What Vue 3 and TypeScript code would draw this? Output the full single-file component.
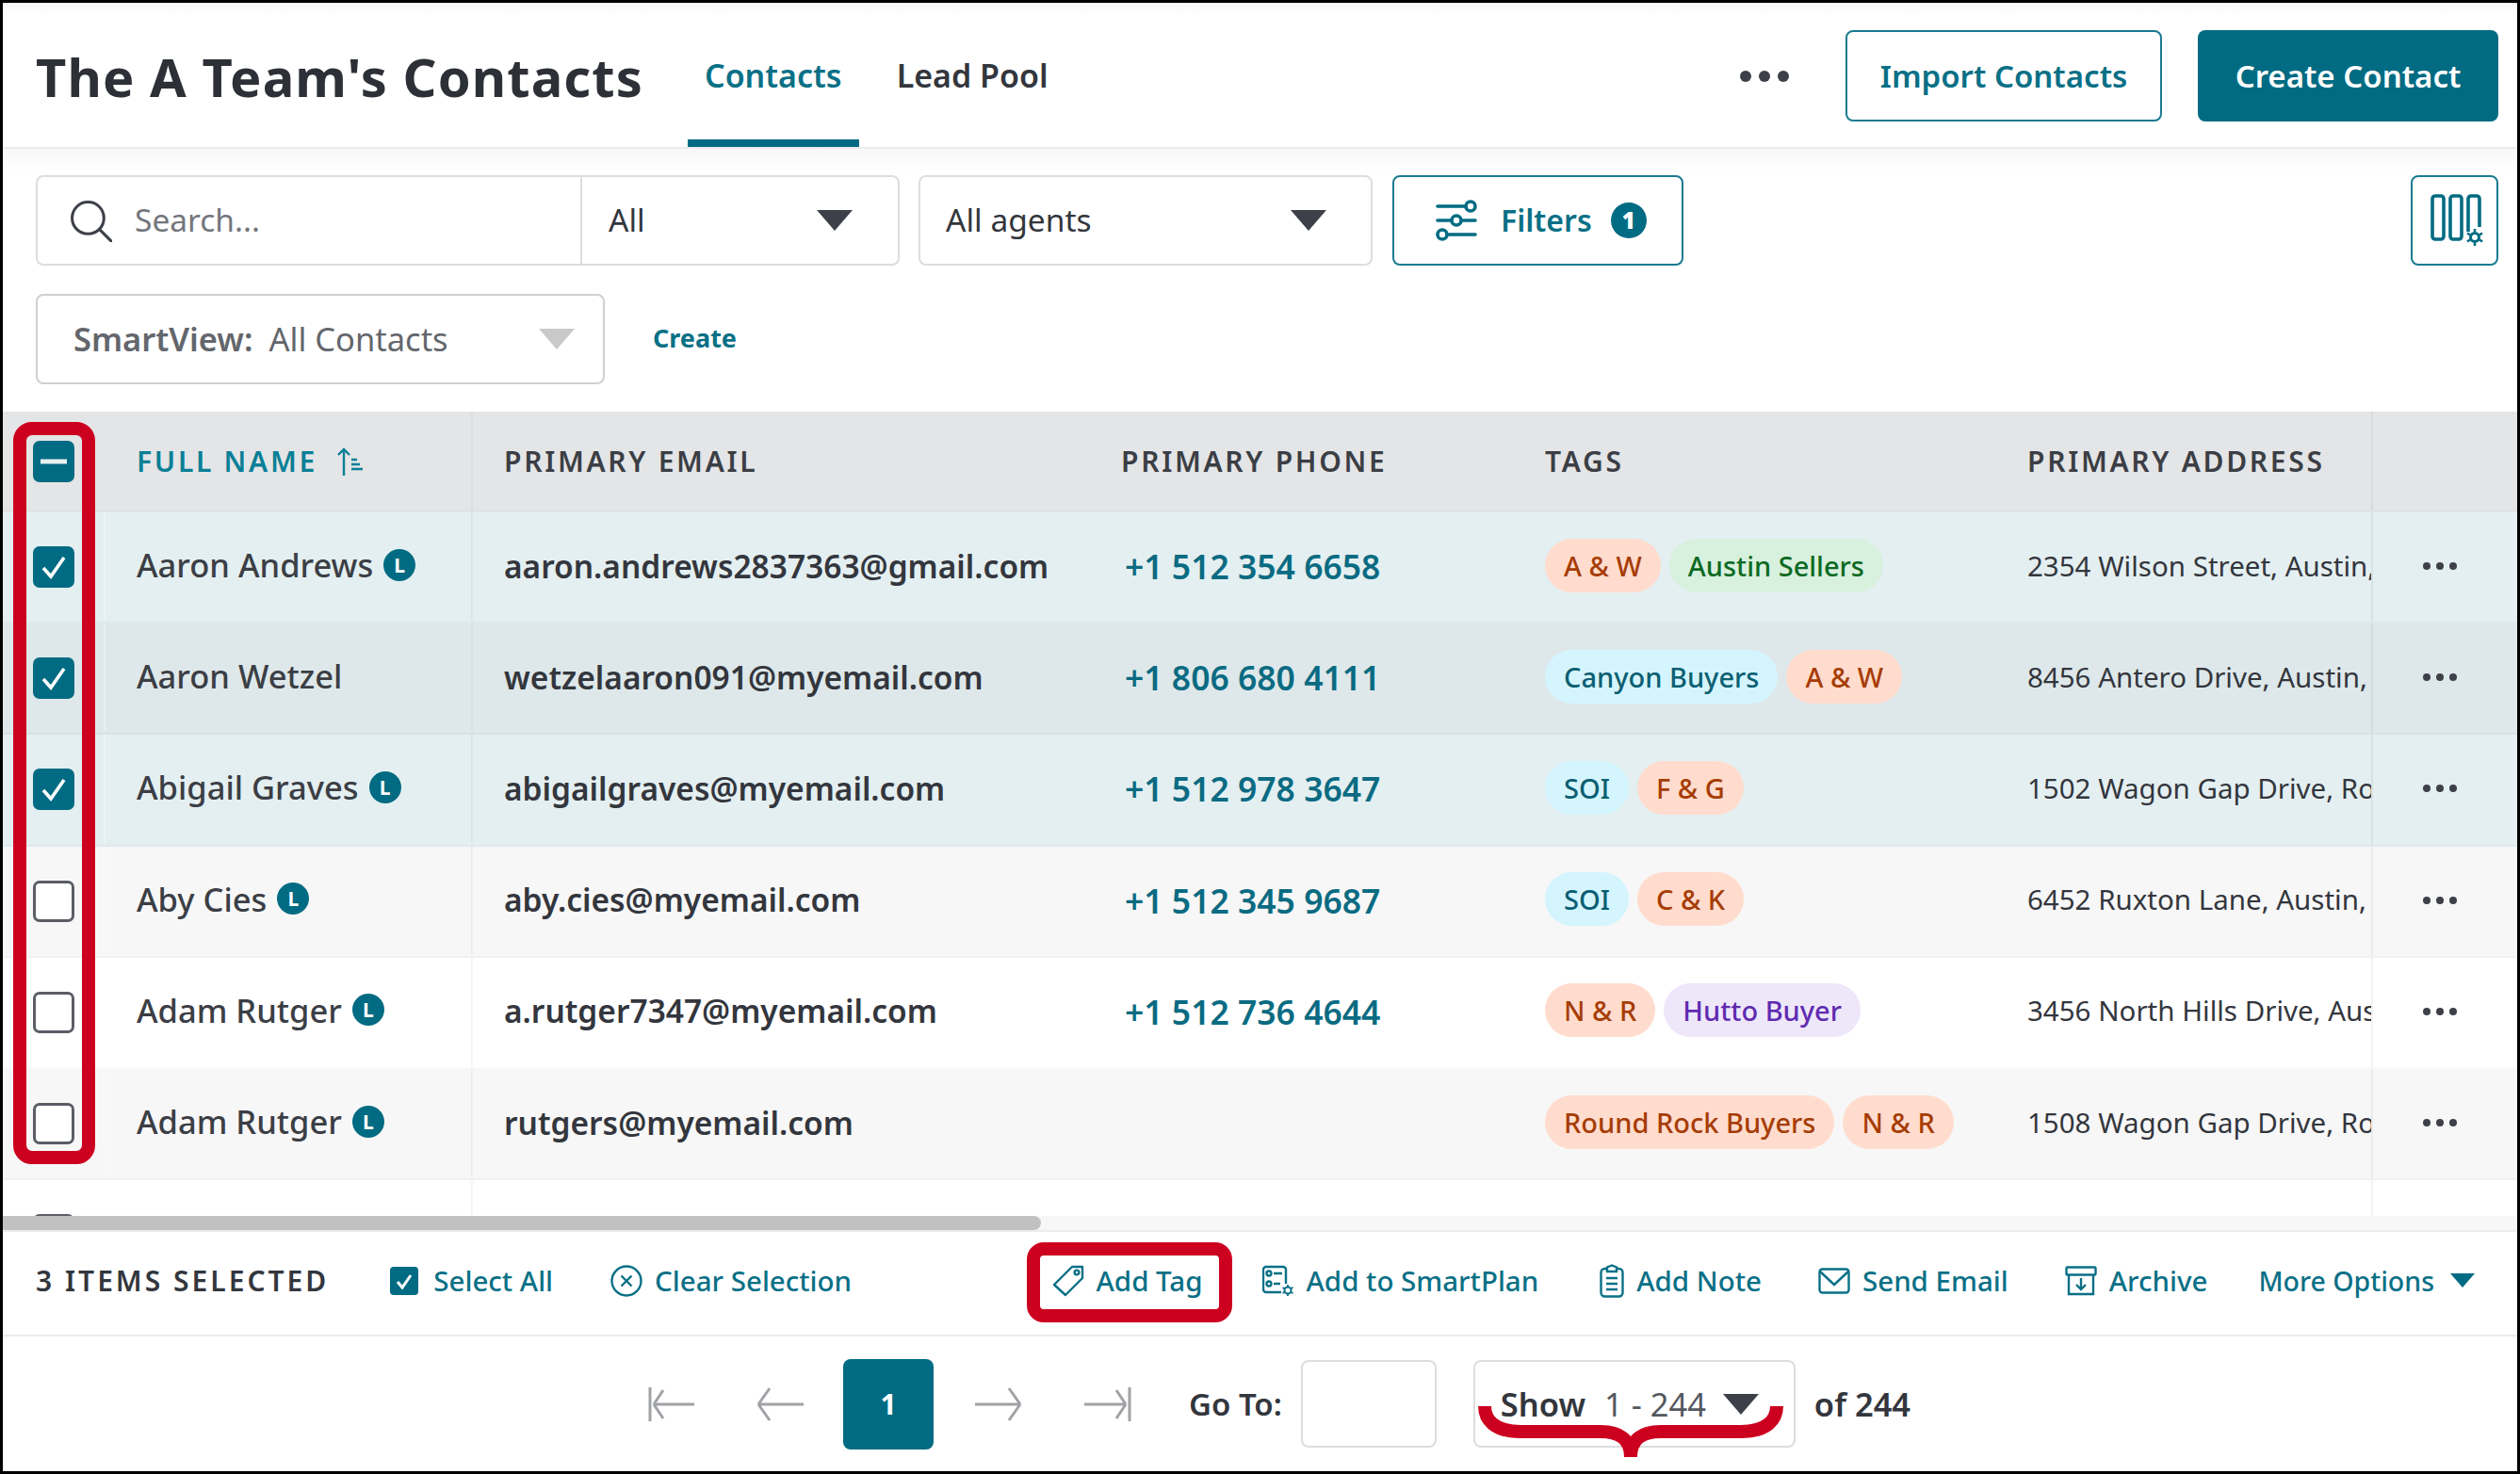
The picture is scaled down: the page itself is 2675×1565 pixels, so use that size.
<script setup lang="ts">
interface Tag { t: string; c: string }
interface Row { name: string; lead: boolean; email: string; phone: string; tags: Tag[]; addr: string; sel: boolean; bg: string }
const rows: Row[] = [
  { name: 'Aaron Andrews', lead: true, email: 'aaron.andrews2837363@gmail.com', phone: '+1 512 354 6658', tags: [{ t: 'A & W', c: 'or' }, { t: 'Austin Sellers', c: 'gr' }], addr: '2354 Wilson Street, Austin, TX 78704', sel: true, bg: 'sel' },
  { name: 'Aaron Wetzel', lead: false, email: 'wetzelaaron091@myemail.com', phone: '+1 806 680 4111', tags: [{ t: 'Canyon Buyers', c: 'bl' }, { t: 'A & W', c: 'or' }], addr: '8456 Antero Drive, Austin, TX 78729', sel: true, bg: 'sel2' },
  { name: 'Abigail Graves', lead: true, email: 'abigailgraves@myemail.com', phone: '+1 512 978 3647', tags: [{ t: 'SOI', c: 'bl' }, { t: 'F & G', c: 'or' }], addr: '1502 Wagon Gap Drive, Round Rock, TX', sel: true, bg: 'sel' },
  { name: 'Aby Cies', lead: true, email: 'aby.cies@myemail.com', phone: '+1 512 345 9687', tags: [{ t: 'SOI', c: 'bl' }, { t: 'C & K', c: 'or' }], addr: '6452 Ruxton Lane, Austin, TX 78749', sel: false, bg: 'gray' },
  { name: 'Adam Rutger', lead: true, email: 'a.rutger7347@myemail.com', phone: '+1 512 736 4644', tags: [{ t: 'N & R', c: 'or' }, { t: 'Hutto Buyer', c: 'pu' }], addr: '3456 North Hills Drive, Austin, TX', sel: false, bg: 'white' },
  { name: 'Adam Rutger', lead: true, email: 'rutgers@myemail.com', phone: '', tags: [{ t: 'Round Rock Buyers', c: 'or' }, { t: 'N & R', c: 'or' }], addr: '1508 Wagon Gap Drive, Round Rock, TX', sel: false, bg: 'gray' },
  { name: '', lead: false, email: '', phone: '', tags: [], addr: '', sel: false, bg: 'white' },
]
</script>

<template>
  <div class="page">
    <header class="top">
      <h1 class="title">The A Team's Contacts</h1>
      <nav class="tabs">
        <a class="tab active">Contacts</a>
        <a class="tab">Lead Pool</a>
      </nav>
      <div class="top-right">
        <span class="bigdots"><i></i><i></i><i></i></span>
        <button class="btn outline import">Import Contacts</button>
        <button class="btn solid create">Create Contact</button>
      </div>
    </header>

    <section class="tools">
      <div class="tool-row">
        <div class="box searchbox">
          <div class="search">
            <svg class="i-search" viewBox="0 0 44 44" fill="none" stroke="#3d4049" stroke-width="3" stroke-linecap="round"><circle cx="19" cy="19" r="16.5" /><path d="M31 31 43 43" /></svg>
            <span class="ph">Search...</span>
          </div>
          <div class="scope"><span>All</span><i class="tri dark"></i></div>
        </div>
        <div class="box agents"><span>All agents</span><i class="tri dark"></i></div>
        <button class="box filters">
          <svg class="i-filter" viewBox="0 0 44 44" fill="none" stroke="#006b82" stroke-width="3.6" stroke-linecap="round">
            <path d="M2 7H32M2 22H16M28 22H42M14 37H42" /><circle cx="37" cy="7" r="5" /><circle cx="22" cy="22" r="5" /><circle cx="7" cy="37" r="5" />
          </svg>
          <span>Filters</span>
          <b class="badge">1</b>
        </button>
        <button class="box colbtn">
          <svg class="i-col" viewBox="0 0 56 56" fill="none" stroke="#006b82" stroke-width="3.6">
            <rect x="2" y="2" width="12" height="46" rx="3" /><rect x="21" y="2" width="12" height="46" rx="3" /><path d="M40 40V5a3 3 0 0 1 3-3h6a3 3 0 0 1 3 3v30" />
            <circle cx="47" cy="46" r="4.5" stroke-width="3" /><path d="M47 37v3M47 52v3M39 41.500l3 2M52 48.500l3 2M39 50.500l3-2M52 43.500l3-2" stroke-width="2.600" />
          </svg>
        </button>
      </div>
      <div class="tool-row second">
        <div class="box smart">
          <span class="sv"><b>SmartView:</b>All Contacts</span>
          <i class="tri light"></i>
        </div>
        <a class="create-link">Create</a>
      </div>
    </section>

    <section class="table">
      <div class="thead">
        <div class="c-check">
          <span class="cb on"><svg viewBox="0 0 44 44"><path d="M8 22H36" stroke="#e8eff1" stroke-width="5" /></svg></span>
        </div>
        <div class="c-name th sorted">
          FULL NAME
          <svg class="i-sort" viewBox="0 0 30 30" fill="none" stroke="#0a7f96" stroke-width="2.400"><path d="M8 30V2M2 8 8 2l6 6M16 13h6M16 18h9M16 23h12" /></svg>
        </div>
        <div class="c-email th">PRIMARY EMAIL</div>
        <div class="c-phone th">PRIMARY PHONE</div>
        <div class="c-tags th">TAGS</div>
        <div class="c-addr th">PRIMARY ADDRESS</div>
        <div class="c-act"></div>
      </div>
      <div class="tbody">
        <div v-for="(r, i) in rows" :key="i" class="row" :class="r.bg">
          <div class="c-check">
            <span class="cb" :class="{ on: r.sel }">
              <svg v-if="r.sel" viewBox="0 0 44 44" fill="none"><path d="M11 23 19 32 33 12" stroke="#fff" stroke-width="3.600" /></svg>
            </span>
          </div>
          <div class="c-name td-name">
            <span>{{ r.name }}</span>
            <b v-if="r.lead" class="lead">L</b>
          </div>
          <div class="c-email td-email">{{ r.email }}</div>
          <div class="c-phone td-phone">{{ r.phone }}</div>
          <div class="c-tags td-tags">
            <span v-for="t in r.tags" :key="t.t" class="tag" :class="t.c">{{ t.t }}</span>
          </div>
          <div class="c-addr td-addr">{{ r.addr }}</div>
          <div class="c-act">
            <span v-if="r.name" class="dots"><i></i><i></i><i></i></span>
          </div>
        </div>
      </div>
      <div class="scrollbar"><div class="thumb"></div></div>
    </section>

    <section class="selbar">
      <span class="count">3 ITEMS SELECTED</span>
      <a class="act sel-all">
        <span class="mini"><svg viewBox="0 0 30 30" fill="none"><path d="M8 16 13 22 22 9" stroke="#fff" stroke-width="3" /></svg></span>
        Select All
      </a>
      <a class="act clear">
        <svg class="ic" viewBox="0 0 34 34" fill="none" stroke="#0a7086" stroke-width="2.400"><circle cx="17" cy="17" r="15.500" /><path d="M11.500 11.500 22.500 22.500M22.500 11.500 11.500 22.500" /></svg>
        Clear Selection
      </a>
      <div class="right-acts">
        <a class="act addtag">
          <svg class="ic" viewBox="0 0 34 34" fill="none" stroke="#0a7086" stroke-width="2.400" stroke-linejoin="round"><path d="M21 2H32V14L14 32 2 21Z" /><circle cx="26" cy="8" r="2.400" /></svg>
          Add Tag
          <span class="redbox"></span>
        </a>
        <a class="act a-plan">
          <svg class="ic" viewBox="0 0 34 34" fill="none" stroke="#0a7086" stroke-width="2.400"><path d="M25 20V5a3 3 0 0 0-3-3H4a3 3 0 0 0-3 3v21a3 3 0 0 0 3 3h16" /><circle cx="7" cy="9" r="2.500" /><circle cx="7" cy="20" r="2.500" /><path d="M12 9h9M12 20h7" /><circle cx="27" cy="27" r="3.500" stroke-width="2" /><path d="M27 21v2.500M27 30.500V33M21.500 24l2 1.200M30.500 29l2 1.200M21.500 30l2-1.200M30.500 25l2-1.200" stroke-width="1.800" /></svg>
          Add to SmartPlan
        </a>
        <a class="act a-note">
          <svg class="ic note" viewBox="0 0 26 36" fill="none" stroke="#0a7086" stroke-width="2.400"><rect x="1.500" y="5" width="23" height="29.500" rx="4" /><path d="M8 5V3.500L13 1.500 18 3.500V8H8Z" fill="#fff" /><path d="M7 15h12M7 21h12M7 27h12" /></svg>
          Add Note
        </a>
        <a class="act a-send">
          <svg class="ic" viewBox="0 0 34 28" fill="none" stroke="#0a7086" stroke-width="2.400"><rect x="1.500" y="1.500" width="31" height="25" rx="3" /><path d="M2 4 17 18 32 4" /></svg>
          Send Email
        </a>
        <a class="act a-arch">
          <svg class="ic" viewBox="0 0 34 32" fill="none" stroke="#0a7086" stroke-width="2.400"><rect x="1.500" y="1.500" width="31" height="8" rx="1" /><path d="M4 10V30H30V10M17 13V24M12 20l5 5 5-5" /></svg>
          Archive
        </a>
        <a class="act more">More Options<i class="tri teal"></i></a>
      </div>
    </section>

    <footer class="pager">
      <svg class="pg" viewBox="0 0 50 36" fill="none" stroke="#a0a2a6" stroke-width="3"><path d="M2 0V36M6 18H49M6 18 16 3M6 18 16 33" /></svg>
      <svg class="pg prev" viewBox="0 0 50 36" fill="none" stroke="#a0a2a6" stroke-width="3"><path d="M2 18H50M2 18 14 1M2 18 14 35" /></svg>
      <span class="pnum">1</span>
      <svg class="pg next" viewBox="0 0 50 36" fill="none" stroke="#a0a2a6" stroke-width="3"><path d="M0 18H48M48 18 36 1M48 18 36 35" /></svg>
      <svg class="pg last" viewBox="0 0 50 36" fill="none" stroke="#a0a2a6" stroke-width="3"><path d="M48 0V36M0 18H44M44 18 34 3M44 18 34 33" /></svg>
      <b class="goto">Go To:</b>
      <span class="gobox"></span>
      <div class="showbox">
        <b>Show</b><span>1 - 244</span><i class="tri dark small"></i>
        <svg class="brace" viewBox="0 0 324 54" fill="none" stroke="#cc001f" stroke-width="14"><path d="M7 0C7 14 17 27 45 27H130C150 27 162 35 162 54 162 35 174 27 194 27H279C307 27 317 14 317 0" /></svg>
      </div>
      <b class="of">of 244</b>
    </footer>

    <div class="redcol"></div>
  </div>
</template>

<style>
body { margin: 0; background: #fff; }
</style>

<style scoped>
.page { position: relative; width: 2675px; height: 1565px; box-sizing: border-box; border: 3px solid #000; display: flex; flex-direction: column; overflow: hidden; background: #fff; font-family: "Noto Sans", sans-serif; color: #33363d; }
a { cursor: pointer; }
i { font-style: normal; }
button { font-family: inherit; cursor: pointer; }

.top { height: 155px; flex: none; box-sizing: border-box; display: flex; align-items: flex-start; padding-left: 35px; border-bottom: 2px solid #ececec; background: linear-gradient(#f9f9f9, #fff 14px); }
.title { margin: 43px 0 0; font-size: 56px; line-height: 70px; font-weight: 700; color: #2d3037; letter-spacing: 1.1px; white-space: nowrap; }
.tabs { display: flex; margin-left: 47px; gap: 22px; }
.tab { height: 153px; box-sizing: border-box; padding: 54px 18px 0; font-size: 34px; line-height: 46px; font-weight: 600; color: #33363d; border-bottom: 8px solid transparent; white-space: nowrap; }
.tab.active { color: #0a7086; border-bottom-color: #006b82; }
.top-right { margin-left: auto; display: flex; align-items: center; height: 97px; margin-top: 29px; padding-right: 20px; }
.bigdots { display: flex; gap: 8px; margin-right: 60px; }
.bigdots i { width: 12px; height: 12px; border-radius: 50%; background: #3d4049; }
.btn { height: 97px; box-sizing: border-box; border-radius: 8px; font-size: 33px; font-weight: 600; padding-bottom: 2px; }
.outline { width: 336px; background: #fff; border: 2px solid #1a7a90; color: #0a7086; }
.solid { width: 319px; background: #006b82; border: 0; color: #fff; margin-left: 38px; }

.tools { flex: none; height: 279px; box-sizing: border-box; padding: 28px 20px 0 35px; background: linear-gradient(#f7f7f7, #fff 24px); }
.tool-row { display: flex; height: 96px; }
.tool-row.second { margin-top: 30px; align-items: center; }
.box { box-sizing: border-box; height: 96px; background: #fff; border: 2px solid #dcdddf; border-radius: 8px; display: flex; align-items: center; font-size: 33.5px; color: #33363d; }
.box > span, .scope > span, .ph { position: relative; top: -1px; }
.searchbox { width: 917px; }
.search { width: 578px; height: 100%; box-sizing: border-box; display: flex; align-items: center; padding-left: 34px; border-right: 2px solid #dcdddf; flex: none; }
.i-search { width: 45px; height: 45px; }
.ph { margin-left: 24px; color: #74767c; }
.scope { flex: 1; display: flex; align-items: center; justify-content: space-between; padding: 0 48px 0 28px; }
.tri { display: block; width: 0; height: 0; border-left: 19px solid transparent; border-right: 19px solid transparent; border-top: 22px solid #3d4049; }
.tri.light { border-top-color: #c9c9c9; }
.tri.teal { border-left-width: 13px; border-right-width: 13px; border-top: 15px solid #006b82; margin-left: 17px; }
.tri.small { border-left-width: 19px; border-right-width: 19px; }
.agents { width: 482px; margin-left: 20px; padding: 0 47px 0 27px; justify-content: space-between; }
.filters { width: 309px; margin-left: 21px; border-color: #1a7a90; padding-left: 44px; color: #0a7086; font-weight: 600; font-size: 32px; }
.i-filter { width: 44px; height: 44px; margin-right: 25px; }
.badge { width: 38px; height: 38px; margin-left: 20px; border-radius: 50%; background: #006b82; color: #fff; font-size: 24px; line-height: 38px; text-align: center; }
.colbtn { width: 93px; margin-left: auto; border-color: #1a7a90; padding: 0 0 0 19px; }
.i-col { width: 56px; height: 56px; }
.smart { width: 604px; padding: 0 30px 0 38px; justify-content: space-between; border-color: #cfd0d3; color: #63666c; font-size: 34.5px; }
.sv b { font-weight: 600; margin-right: 17px; }
.create-link { margin-left: 51px; margin-top: -3px; color: #0a7086; font-size: 27px; font-weight: 700; }

.table { flex: 1; min-height: 0; display: flex; flex-direction: column; background: #fff; }
.thead, .row { display: grid; grid-template-columns: 107px 392px 655px 450px 512px 398px 155px; }
.thead { flex: none; height: 107px; background: #e4e5e6; align-items: stretch; border-bottom: 2px solid #dfe3e4; box-sizing: border-box; }
.thead > div { display: flex; align-items: center; }
.th { font-size: 30px; font-weight: 600; letter-spacing: 2.7px; color: #3b3e45; padding-left: 33px; white-space: nowrap; }
.sorted { color: #0a7f96; padding-left: 35px; background: #e4e5e6; border-right: 2px solid #dcddde; }
.i-sort { width: 30px; height: 30px; margin-left: 20px; }
.thead .c-act { border-left: 2px solid #d9dadb; }
.tbody { flex: 1; min-height: 0; overflow: hidden; }
.row { height: 118.2px; box-sizing: border-box; align-items: stretch; border-bottom: 2px solid rgba(0, 0, 0, .025); }
.row > div { display: flex; align-items: center; min-width: 0; }
.sel { background: #e4eff1; }
.sel2 { background: #dee8ea; }
.gray { background: #f7f7f7; }
.white { background: #fff; }
.c-check { justify-content: center; }
.cb { display: block; width: 44px; height: 44px; box-sizing: border-box; background: #fff; border: 3px solid #5a5d66; border-radius: 7px; }
.cb.on { background: #006b82; border: 0; }
.cb svg { display: block; width: 100%; height: 100%; }
.td-name { padding: 0 0 3px 33px; font-size: 34.500px; font-weight: 500; color: #3b3e45; margin-bottom: 2px; border-left: 2px solid rgba(255, 255, 255, .35); border-right: 2px solid rgba(0, 0, 0, .04); white-space: nowrap; }
.lead { width: 34px; height: 34px; margin-left: 11px; border-radius: 50%; background: #006b82; color: #fff; font-size: 21px; line-height: 34px; text-align: center; flex: none; }
.td-email { padding: 0 0 3px 33px; font-size: 33.5px; font-weight: 600; color: #33363d; white-space: nowrap; }
.td-phone { padding: 0 0 2px 37px; font-size: 35.5px; font-weight: 600; color: #0a6b82; white-space: nowrap; }
.td-tags { padding-left: 33px; gap: 9px; padding-bottom: 4px; }
.tag { height: 57px; padding: 0 20px; border-radius: 29px; font-size: 29px; font-weight: 500; line-height: 57px; white-space: nowrap; }
.or { background: #ffdccd; color: #a63c05; }
.gr { background: #d8f0de; color: #0c6a22; }
.bl { background: #d4f5fd; color: #0b5e72; }
.pu { background: #eee7f9; color: #5f2bb0; }
.td-addr { padding: 0 0 4px 33px; font-size: 29.500px; color: #33363d; white-space: nowrap; overflow: hidden; }
.row .c-act { border-left: 2px solid rgba(0, 0, 0, .05); justify-content: flex-start; padding-left: 53px; padding-bottom: 2px; }
.dots { display: flex; gap: 6px; }
.dots i { width: 8px; height: 8px; border-radius: 50%; background: #3d4049; }

.scrollbar { flex: none; height: 15px; background: #f7f7f7; }
.thumb { width: 1102px; height: 100%; background: #c1c1c1; border-radius: 0 8px 8px 0; }

.selbar { flex: none; height: 113px; box-sizing: border-box; display: flex; align-items: center; padding: 0 45px 6px 35px; border-top: 2px solid #ececec; border-bottom: 2px solid #ececec; }
.count { font-size: 30px; font-weight: 600; letter-spacing: 3px; color: #33363d; white-space: nowrap; }
.act { position: relative; display: flex; align-items: center; font-size: 29.500px; font-weight: 500; color: #0a7086; white-space: nowrap; }
.sel-all { margin-left: 65px; }
.clear { margin-left: 61px; }
.mini { width: 30px; height: 30px; border-radius: 4px; background: #006b82; margin-right: 16px; }
.mini svg { display: block; }
.ic { width: 34px; height: 34px; margin-right: 13px; flex: none; }
.note { width: 26px; height: 36px; }
.right-acts { margin-left: auto; display: flex; align-items: center; }
.a-plan { margin-left: 63px; }
.a-note { margin-left: 65px; }
.a-send { margin-left: 60px; }
.a-arch { margin-left: 60px; }
.more { margin-left: 54px; font-size: 28.5px; }
.redbox { position: absolute; left: -27px; top: -20px; width: 218px; height: 85px; box-sizing: border-box; border: 14px solid #cc001f; border-radius: 18px; pointer-events: none; }

.pager { flex: none; height: 143px; display: flex; align-items: center; padding-left: 685px; }
.pg { width: 50px; height: 36px; flex: none; }
.prev { margin-left: 65px; }
.pnum { width: 96px; height: 96px; margin-left: 42px; border-radius: 8px; background: #006b82; color: #fff; font-size: 30px; font-weight: 700; line-height: 96px; text-align: center; }
.next { margin-left: 44px; }
.last { margin-left: 66px; }
.goto { margin-left: 61px; font-size: 33px; font-weight: 600; color: #33363d; white-space: nowrap; }
.gobox { width: 144px; height: 93px; margin-left: 20px; box-sizing: border-box; border: 2px solid #dcdddf; border-radius: 8px; }
.showbox { position: relative; width: 342px; height: 93px; margin-left: 39px; box-sizing: border-box; border: 2px solid #dcdddf; border-radius: 8px; display: flex; align-items: center; padding-left: 27px; font-size: 34.500px; white-space: nowrap; }
.showbox b { font-weight: 600; }
.showbox span { margin-left: 20px; color: #55585f; }
.showbox .tri { margin-left: 18px; }
.brace { position: absolute; left: 3px; top: 47px; width: 324px; height: 54px; overflow: visible; }
.of { margin-left: 20px; font-size: 34.500px; font-weight: 600; white-space: nowrap; }

.redcol { position: absolute; left: 11px; top: 445px; width: 87px; height: 788px; box-sizing: border-box; border: 14px solid #cc001f; border-radius: 20px; pointer-events: none; }
</style>
